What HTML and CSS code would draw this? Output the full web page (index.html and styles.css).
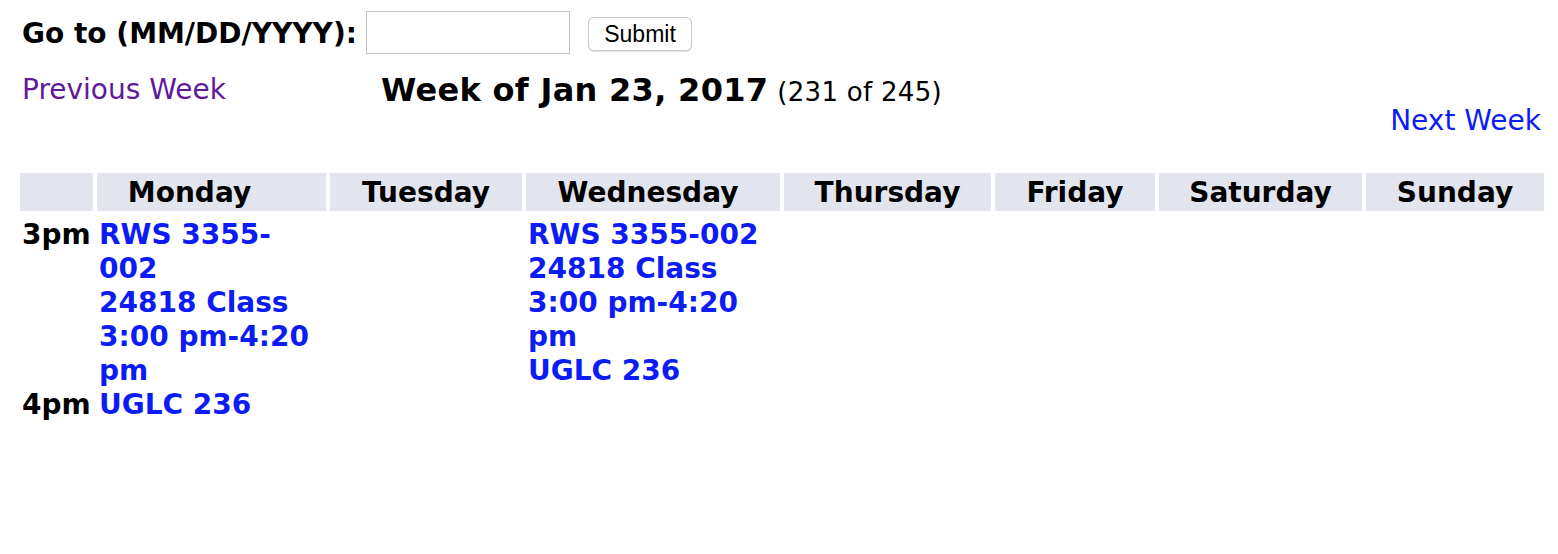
FILE: index.html
```html
<!DOCTYPE html>
<html lang="en">
<head>
<meta charset="utf-8">
<title>Week of Jan 23, 2017</title>
<link rel="stylesheet" href="styles.css">
</head>
<body>
<div class="page">
  <form class="goto">
    <label class="goto-label" for="goto-date">Go to (MM/DD/YYYY):</label>
    <input class="goto-input" id="goto-date" type="text">
    <button class="goto-submit" type="button">Submit</button>
  </form>

  <div class="nav">
    <a class="nav-prev" href="#">Previous Week</a>
    <div class="nav-title"><span class="week">Week of Jan 23, 2017</span> <span class="count">(231 of 245)</span></div>
    <a class="nav-next" href="#">Next Week</a>
  </div>

  <table class="cal">
    <thead>
      <tr>
        <th class="c-time"></th>
        <th class="c-mon">Monday</th>
        <th class="c-tue">Tuesday</th>
        <th class="c-wed">Wednesday</th>
        <th class="c-thu">Thursday</th>
        <th class="c-fri">Friday</th>
        <th class="c-sat">Saturday</th>
        <th class="c-sun">Sunday</th>
      </tr>
    </thead>
    <tbody>
      <tr>
        <td class="hour">3pm</td>
        <td class="day" rowspan="2"><a class="event" href="#">RWS 3355-002<br>24818 Class<br>3:00 pm-4:20 pm<br>UGLC 236</a></td>
        <td class="day" rowspan="2"></td>
        <td class="day" rowspan="2"><a class="event" href="#">RWS 3355-002<br>24818 Class<br>3:00 pm-4:20 pm<br>UGLC 236</a></td>
        <td class="day" rowspan="2"></td>
        <td class="day" rowspan="2"></td>
        <td class="day" rowspan="2"></td>
        <td class="day" rowspan="2"></td>
      </tr>
      <tr>
        <td class="hour hour-last">4pm</td>
      </tr>
    </tbody>
  </table>
</div>
</body>
</html>
```
FILE: styles.css
```css
html, body {
  margin: 0;
  padding: 0;
  background: #ffffff;
}

body {
  font-family: "DejaVu Sans", Verdana, sans-serif;
  font-size: 28px;
  line-height: 34px;
  color: #000000;
}

.page {
  width: 1532px;
  padding-left: 16px;
}

/* Go-to form */
.goto {
  display: flex;
  align-items: center;
  margin: 0;
  padding: 11px 0 0 6px;
}

.goto-label {
  width: 338px;
  font-weight: bold;
  padding-top: 2px;
}

.goto-input {
  box-sizing: border-box;
  width: 204px;
  height: 43px;
  margin: 0 0 0 6px;
  border: 1px solid #c2c2c2;
  background: #ffffff;
  padding: 0 6px;
  font-size: 22px;
}

.goto-submit {
  box-sizing: border-box;
  width: 104px;
  height: 34px;
  margin: 3px 0 0 18px;
  padding: 0;
  border: 1px solid #c8c8c8;
  border-radius: 6px;
  background: #ffffff;
  box-shadow: 0 1px 1px rgba(0, 0, 0, 0.12);
  font-family: "Liberation Sans", Arial, sans-serif;
  font-size: 23px;
  color: #000000;
}

/* Week navigation */
.nav {
  display: flex;
  align-items: flex-start;
  margin-top: 19px;
  padding: 0 7px 0 6px;
}

.nav a {
  text-decoration: none;
}

.nav-prev {
  color: #60199a;
  width: 359px;
}

.nav-title {
  line-height: 38px;
  margin-top: -2px;
}

.week {
  font-weight: bold;
  font-size: 32px;
  letter-spacing: 0.3px;
}

.count {
  font-size: 26px;
  letter-spacing: 0.3px;
}

.nav-next {
  margin-left: auto;
  margin-top: 31px;
  color: #0b1cf5;
}

/* Calendar table */
.cal {
  width: 1532px;
  table-layout: fixed;
  border-collapse: separate;
  border-spacing: 4px;
  margin-top: 31px;
}

.cal th,
.cal td {
  box-sizing: border-box;
  padding: 3px 2px 1px 2px;
  line-height: 34px;
}

.cal th {
  background: #e2e4ee;
  font-weight: bold;
  text-align: center;
  vertical-align: top;
}

.c-time { width: 73px; }
.c-mon  { width: 229px; padding-right: 46px !important; }
.c-tue  { width: 192px; }
.c-wed  { width: 254px; padding-right: 12px !important; }
.c-thu  { width: 207px; }
.c-fri  { width: 160px; }
.c-sat  { width: 203px; }
.c-sun  { width: 178px; }

.cal td {
  vertical-align: top;
  text-align: left;
}

.hour {
  font-weight: bold;
  white-space: nowrap;
}

.cal td.hour-last {
  vertical-align: bottom;
}

.event {
  color: #0b1cf5;
  font-weight: bold;
  text-decoration: none;
}
```
